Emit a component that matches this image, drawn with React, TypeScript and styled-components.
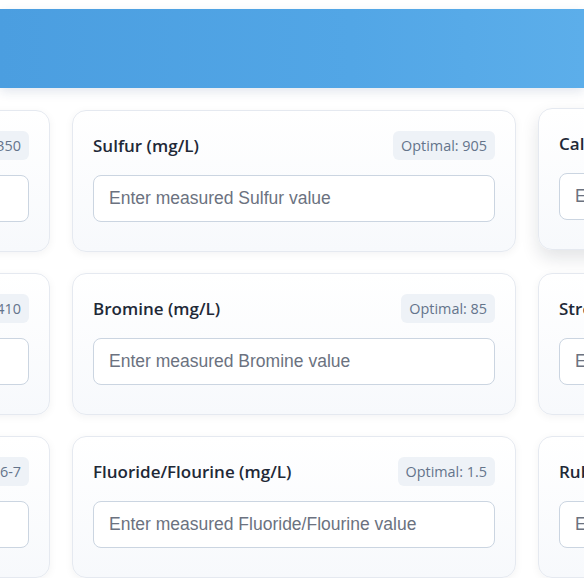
import { createGlobalStyle } from "styled-components";
import styled from "styled-components";

const Global = createGlobalStyle`
  body { margin: 0; background: #ffffff; font-family: "Open Sans", sans-serif; overflow: hidden; }
`;

const Page = styled.div`
  padding-top: 9px;
  width: 584px;
  overflow: hidden;
`;

const Header = styled.div`
  height: 79px;
  background: linear-gradient(90deg, #4b9ee0 0%, #52a6e6 60%, #5caeea 100%);
  box-shadow: 0 4px 10px rgba(30, 64, 120, 0.12);
`;

const Grid = styled.div`
  display: grid;
  grid-template-columns: repeat(3, 444px);
  gap: 21px 22px;
  margin: 22px 0 0 -394px;
`;

const Card = styled.div<{ $hover?: boolean }>`
  height: 142px;
  box-sizing: border-box;
  padding: 19px 20px;
  border-radius: 14px;
  border: 1px solid #e5e9f0;
  background: linear-gradient(180deg, #ffffff 0%, #f7f9fc 100%);
  box-shadow: ${({ $hover }) =>
    $hover ? "0 8px 18px rgba(15, 23, 42, 0.12)" : "0 2px 8px rgba(15, 23, 42, 0.05)"};
  transform: ${({ $hover }) => ($hover ? "translateY(-2px)" : "none")};
  display: flex;
  flex-direction: column;
  gap: 14px;
`;

const Top = styled.div`
  display: flex;
  justify-content: space-between;
  align-items: center;
  height: 31px;
`;

const Label = styled.span`
  font-size: 17px;
  font-weight: 600;
  color: #1f2937;
  white-space: nowrap;
`;

const Badge = styled.span`
  background: #eef2f7;
  color: #64748b;
  font-family: "Open Sans", sans-serif;
  font-size: 14.4px;
  padding: 5px 8px;
  border-radius: 6px;
  white-space: nowrap;
`;

const Input = styled.input`
  height: 47px;
  box-sizing: border-box;
  border: 1px solid #cbd5e1;
  border-radius: 8px;
  padding: 0 15px;
  font-family: "Liberation Sans", Arial, sans-serif;
  font-size: 17.5px;
  background: #ffffff;
  outline: none;
  &::placeholder { color: #6b7280; }
`;

const items = [
  { name: "Magnesium", unit: "mg/L", opt: "1350" },
  { name: "Sulfur", unit: "mg/L", opt: "905" },
  { name: "Calcium", unit: "mg/L", opt: "420", hover: true },
  { name: "Potassium", unit: "mg/L", opt: "410" },
  { name: "Bromine", unit: "mg/L", opt: "85" },
  { name: "Strontium", unit: "mg/L", opt: "8" },
  { name: "Alkalinity", unit: "dKH", opt: "6-7" },
  { name: "Fluoride/Flourine", unit: "mg/L", opt: "1.5" },
  { name: "Rubidium", unit: "mg/L", opt: "0.12" },
];

export default function App() {
  return (
    <Page>
      <Global />
      <Header />
      <Grid>
        {items.map((it) => (
          <Card key={it.name} $hover={it.hover}>
            <Top>
              <Label>
                {it.name} ({it.unit})
              </Label>
              <Badge>Optimal: {it.opt}</Badge>
            </Top>
            <Input placeholder={`Enter measured ${it.name} value`} />
          </Card>
        ))}
      </Grid>
    </Page>
  );
}
